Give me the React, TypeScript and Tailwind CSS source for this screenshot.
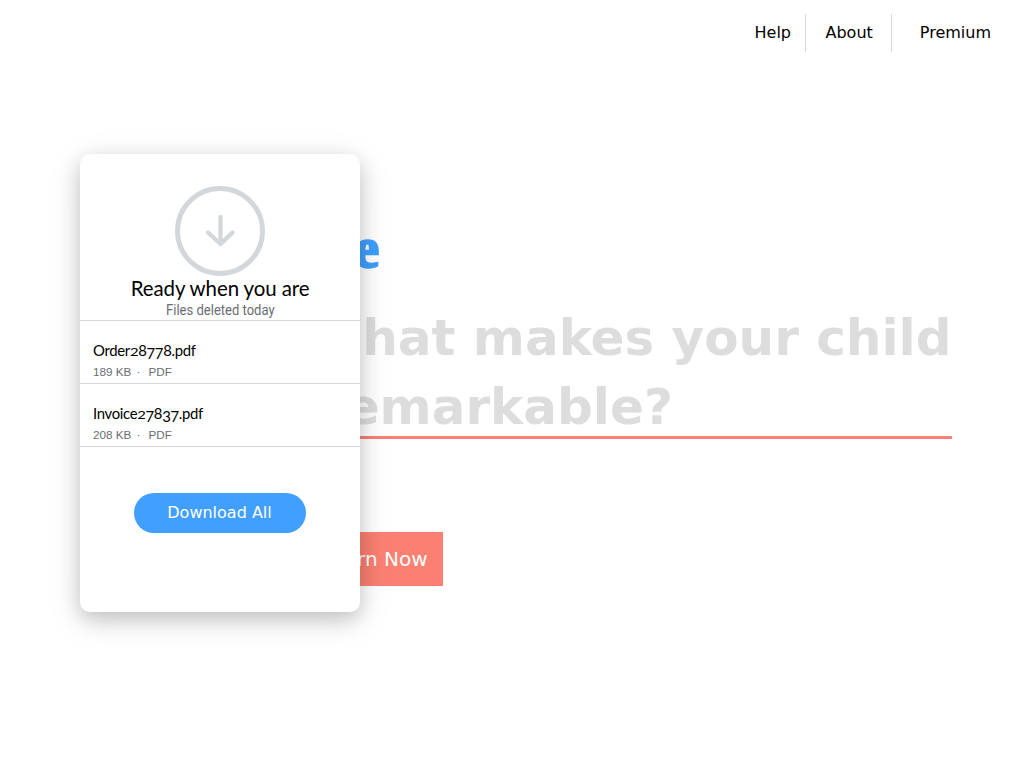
const files = [
  { name: 'Order28778.pdf', size: '189 KB' },
  { name: 'Invoice27837.pdf', size: '208 KB' },
];

// Old-style figures: 2 sits at x-height, 3 and 7 drop below the baseline.
function figureClass(ch: string) {
  if (ch === '2') return 'inline-block origin-[50%_76%] scale-y-[0.76]';
  if (ch === '3' || ch === '7') return 'inline-block translate-y-[3px]';
  return 'inline-block';
}

function FileName({ name }: { name: string }) {
  return (
    <span className="block h-5 w-max origin-left scale-x-[0.93] whitespace-nowrap font-['Lato'] text-[16px] leading-5 tracking-[-0.35px] text-black">
      {name.split(/(\d)/).map((part, i) =>
        /^\d$/.test(part) ? <span key={i} className={figureClass(part)}>{part}</span> : part,
      )}
    </span>
  );
}

function DownloadCard() {
  return (
    <section className="absolute left-20 top-[154px] flex h-[458px] w-[280px] flex-col items-center rounded-[10px] bg-white pt-8 shadow-[0_8px_36px_rgba(0,0,0,0.1),0_7px_20px_rgba(0,0,0,0.18)]">
      <svg className="h-[90px] w-[90px] shrink-0" viewBox="0 0 90 90" fill="none" stroke="#d4d7d9">
        <circle cx="45" cy="45" r="42.5" strokeWidth="5" />
        <path d="M45.5 31v27M33 46.5l12.5 11.5 12-11.5" strokeWidth="4.3" strokeLinecap="round" strokeLinejoin="round" />
      </svg>
      <h2 className="h-[26px] scale-x-[0.93] whitespace-nowrap font-['Lato'] text-[22px] leading-[23px] tracking-[-0.1px] text-black">Ready when you are</h2>
      <p className="h-[18px] scale-x-[0.93] whitespace-nowrap font-['Roboto'] text-[14px] leading-[17px] text-[#6a6d70]">Files deleted today</p>
      <ul className="w-full border-t border-[#d8d8d8]">
        {files.map((file) => (
          <li key={file.name} className="flex h-[63px] flex-col border-b border-[#d8d8d8] pl-[13px] pt-[19px]">
            <FileName name={file.name} />
            <span className="mt-[3px] flex h-[18px] font-['Liberation_Sans'] text-[11.7px] leading-[18px] text-[#6a6d70]">
              <span className="w-[43.5px]">{file.size}</span>
              <span className="w-3">·</span>
              <span>PDF</span>
            </span>
          </li>
        ))}
      </ul>
      <button className="mt-[46px] h-10 w-[172px] rounded-full bg-[#409fff] pr-px font-['DejaVu_Sans'] text-[16px] text-white">Download All</button>
    </section>
  );
}

export default function App() {
  return (
    <div className="relative h-screen overflow-hidden bg-white font-['DejaVu_Sans'] text-black">
      <nav className="flex h-[66px] items-center justify-end pr-[33px] text-[16px]">
        <a className="pr-[14px]">Help</a>
        <a className="flex h-[38px] items-center border-x border-[#d8d8d8] pl-[19.5px] pr-[18px]">About</a>
        <a className="pl-7">Premium</a>
      </nav>
      <main className="flex flex-col items-start pl-[307px] pr-[72px] pt-[147px]">
        <div className="flex h-[70px] w-[72px] items-center justify-end font-['Liberation_Serif'] text-[56px] font-bold leading-[70px] text-[#409fff] [-webkit-text-stroke:2.4px_#409fff]">e</div>
        <h1 className="mt-[21px] flex h-[135px] w-full flex-col border-b-[3px] border-[#fa8072] text-[50px] font-bold leading-[69px] text-[#ddd]">
          <span className="whitespace-nowrap">What makes your child</span>
          <span className="whitespace-nowrap pl-3.5">remarkable?</span>
        </h1>
        <button className="mt-[93px] flex h-[54px] w-[136px] items-center justify-end bg-[#fa8072] pr-[15.5px] text-[20px] text-white">Learn Now</button>
      </main>
      <DownloadCard />
    </div>
  );
}
